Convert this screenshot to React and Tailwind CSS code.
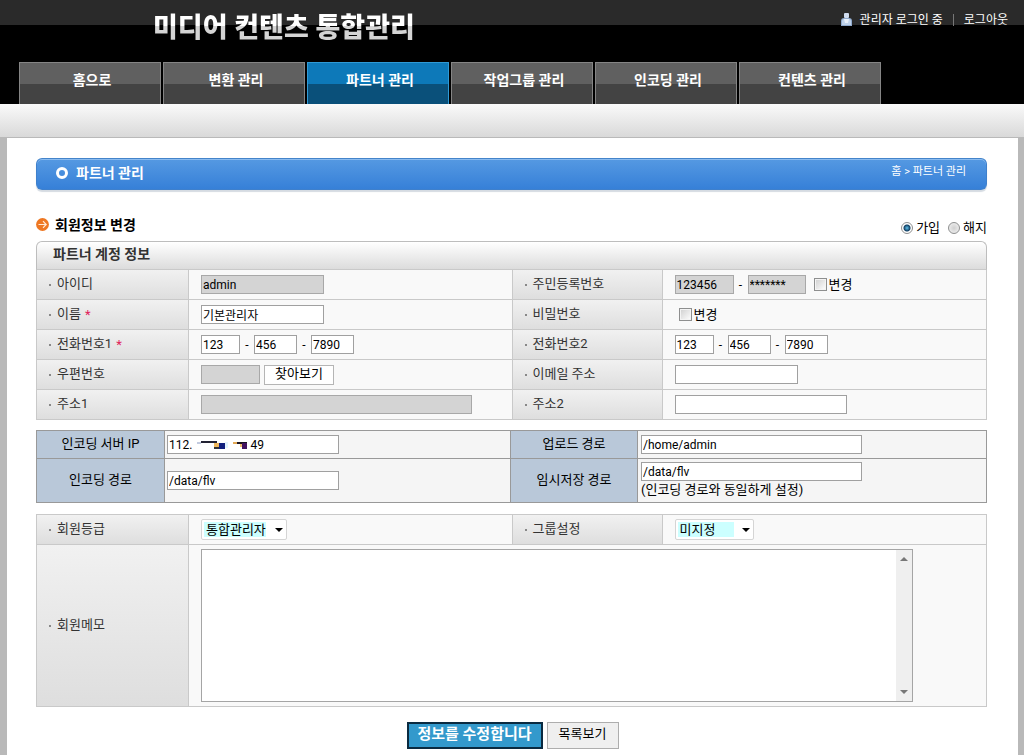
const MENU = [
  '홈으로',
  '변환 관리',
  '파트너 관리',
  '작업그룹 관리',
  '인코딩 관리',
  '컨텐츠 관리',
]

const ACTIVE_MENU = '파트너 관리'

const INPUT =
  'h-[19px] border border-[#a0a0a0] bg-white px-px text-xs leading-4 text-black outline-none'
const INPUT_DISABLED =
  'h-[19px] border border-[#a8a8a8] bg-[#d4d4d4] px-px text-xs leading-4 text-black outline-none'

function UserIcon() {
  return (
    <svg width="11" height="14" viewBox="0 0 11 14" aria-hidden="true">
      <rect x="3" y="0" width="5" height="5" rx="1" fill="#cfdcef" />
      <path d="M0 8 Q0 5 3 5 H8 Q11 5 11 8 V13 H0 Z" fill="#8fa9cc" />
      <path d="M1 8 Q1 6 3 6 H8 Q10 6 10 8 V12 H1 Z" fill="#bfd2ea" />
      <path d="M3 6 H8 L7 10 H4 Z" fill="#e8f0fa" />
    </svg>
  )
}

function ArrowBadge() {
  return (
    <svg width="13" height="13" viewBox="0 0 13 13" aria-hidden="true">
      <circle cx="6.5" cy="6.5" r="6.4" fill="#ee7722" />
      <path
        d="M2.5 6.5 H10 M7 3.2 L10.2 6.5 L7 9.8"
        fill="none"
        stroke="#ffe9d6"
        strokeWidth="1.2"
      />
    </svg>
  )
}

function Header() {
  return (
    <header className="bg-black bg-[linear-gradient(#2a2a2a_25px,#000_25px)]">
      <div className="flex h-[62px] items-start justify-between pr-4 pl-[153px]">
        <h1 className="bg-[linear-gradient(#fff_55%,#d4d4d4_55%)] bg-clip-text pt-2 text-[27px] leading-10 font-black text-transparent">
          미디어 컨텐츠 통합관리
        </h1>
        <div className="flex items-center pt-2.5 text-xs leading-5 text-white">
          <UserIcon />
          <span className="ml-2">관리자 로그인 중</span>
          <span className="mx-2.5 h-3 w-px bg-[#777]" />
          <a href="#logout">로그아웃</a>
        </div>
      </div>
      <nav className="flex gap-0.5 pl-[19px] text-center text-sm leading-[34px] font-bold text-white">
        {MENU.map((name) => (
          <a
            key={name}
            href="#menu"
            className={
              name === ACTIVE_MENU
                ? 'h-[42px] w-[142px] border border-b-0 border-[#2f9ad6] bg-[linear-gradient(#0d79b9_21px,#0a507a_21px)] pl-1'
                : 'h-[42px] w-[142px] border border-b-0 border-[#858585] bg-[linear-gradient(#606060_21px,#434343_21px)] pl-1'
            }
          >
            {name}
          </a>
        ))}
      </nav>
    </header>
  )
}

function Label({ htmlFor, required, children }) {
  return (
    <label
      htmlFor={htmlFor}
      className="flex items-center border-r border-b border-[#c9c9c9] bg-linear-to-b from-[#f1f1f1] to-[#dedede] pl-3 text-[13px] text-[#333]"
    >
      <span className="mr-1 size-0.5 bg-[#888]" />
      <span className="pb-0.5 pl-0.5">{children}</span>
      {required && <span className="ml-1 text-[#e0225a]">*</span>}
    </label>
  )
}

function Cell({ last, children }) {
  return (
    <div
      className={
        last
          ? 'flex min-h-[30px] items-center border-b border-[#c9c9c9] bg-[#f9f9f9] pl-3'
          : 'flex min-h-[30px] items-center border-r border-b border-[#c9c9c9] bg-[#f9f9f9] pl-3'
      }
    >
      {children}
    </div>
  )
}

function Dash() {
  return <span className="w-3.5 text-center text-xs">-</span>
}

function PhoneInputs({ id, name }) {
  return (
    <>
      <input id={id} className={`${INPUT} w-[39px]`} defaultValue="123" />
      <Dash />
      <input aria-label={`${name} 가운데 자리`} className={`${INPUT} w-[43px]`} defaultValue="456" />
      <Dash />
      <input aria-label={`${name} 끝자리`} className={`${INPUT} w-[43px]`} defaultValue="7890" />
    </>
  )
}

function ChangeCheck({ id }) {
  return (
    <label className="flex items-center gap-0.5 text-[13px]">
      <input
        id={id}
        type="checkbox"
        className="size-[13px] appearance-none border border-[#8e8f8f] bg-linear-to-br from-[#cfcfcf] to-white shadow-[inset_0_0_0_1px_#f4f4f4] checked:bg-[#3399cc]"
      />
      변경
    </label>
  )
}

function StatusRadio({ label, ...props }) {
  return (
    <label className="flex items-center gap-[3px] text-[13px] text-black">
      <input
        type="radio"
        name="status"
        className="size-3 appearance-none rounded-full border border-[#8e8f8f] bg-[radial-gradient(#d0d0d0,#f5f5f5)] checked:bg-[radial-gradient(circle,#5fc3ee_0,#123f63_3px,#fff_4px)]"
        {...props}
      />
      {label}
    </label>
  )
}

function Select({ id, wide, options }) {
  return (
    <span className="relative flex">
      <select
        id={id}
        className={
          wide
            ? 'h-[21px] w-[86px] appearance-none rounded-xs border border-[#d5d5d5] bg-white bg-[linear-gradient(#ccffff,#ccffff)] bg-size-[62px_15px] bg-position-[2px_2px] bg-no-repeat pl-1 text-[13px] leading-4 text-black'
            : 'h-[21px] w-[79px] appearance-none rounded-xs border border-[#d5d5d5] bg-white bg-[linear-gradient(#ccffff,#ccffff)] bg-size-[56px_15px] bg-position-[2px_2px] bg-no-repeat pl-1 text-[13px] leading-4 text-black'
        }
      >
        {options.map((option) => (
          <option key={option}>{option}</option>
        ))}
      </select>
      <svg
        width="8"
        height="4"
        viewBox="0 0 8 4"
        className="pointer-events-none absolute top-[9px] right-1"
        aria-hidden="true"
      >
        <path d="M0 0 H8 L4 4 Z" fill="#000" />
      </svg>
    </span>
  )
}

function AccountSection() {
  return (
    <section>
      <h3 className="h-[29px] rounded-t-md border border-[#bdbdbd] border-b-[#c9c9c9] bg-linear-to-b from-white to-[#dcdcdc] pl-4 text-sm leading-6 font-bold text-[#333]">
        파트너 계정 정보
      </h3>
      <div className="grid grid-cols-[152px_1fr_150px_1fr] border-x border-[#c9c9c9]">
        <Label htmlFor="userId">아이디</Label>
        <Cell>
          <input id="userId" readOnly className={`${INPUT_DISABLED} w-[123px]`} defaultValue="admin" />
        </Cell>
        <Label htmlFor="jumin">주민등록번호</Label>
        <Cell last>
          <input id="jumin" readOnly className={`${INPUT_DISABLED} w-[59px]`} defaultValue="123456" />
          <Dash />
          <input
            aria-label="주민등록번호 뒷자리"
            readOnly
            className={`${INPUT_DISABLED} mr-2 w-[58px]`}
            defaultValue="*******"
          />
          <ChangeCheck id="juminChange" />
        </Cell>

        <Label htmlFor="userName" required>
          이름
        </Label>
        <Cell>
          <input id="userName" className={`${INPUT} w-[123px]`} defaultValue="기본관리자" />
        </Cell>
        <Label htmlFor="passwordChange">비밀번호</Label>
        <Cell last>
          <div className="pl-1">
            <ChangeCheck id="passwordChange" />
          </div>
        </Cell>

        <Label htmlFor="phone1" required>
          전화번호1
        </Label>
        <Cell>
          <PhoneInputs id="phone1" name="전화번호1" />
        </Cell>
        <Label htmlFor="phone2">전화번호2</Label>
        <Cell last>
          <PhoneInputs id="phone2" name="전화번호2" />
        </Cell>

        <Label htmlFor="zipcode">우편번호</Label>
        <Cell>
          <input id="zipcode" readOnly className={`${INPUT_DISABLED} w-[59px]`} />
          <button
            type="button"
            className="ml-1 h-5 w-[70px] border border-[#b5b5b5] bg-white pb-1 text-[13px] leading-4"
          >
            찾아보기
          </button>
        </Cell>
        <Label htmlFor="email">이메일 주소</Label>
        <Cell last>
          <input id="email" className={`${INPUT} w-[123px]`} />
        </Cell>

        <Label htmlFor="address1">주소1</Label>
        <Cell>
          <input id="address1" readOnly className={`${INPUT_DISABLED} w-[271px]`} />
        </Cell>
        <Label htmlFor="address2">주소2</Label>
        <Cell last>
          <input id="address2" className={`${INPUT} w-[172px]`} />
        </Cell>
      </div>
    </section>
  )
}

function ServerLabel({ htmlFor, children }) {
  return (
    <label
      htmlFor={htmlFor}
      className="flex items-center justify-center bg-[#b9c8d9] pb-0.5 text-[13px] text-black"
    >
      {children}
    </label>
  )
}

function ServerSection() {
  return (
    <section className="mt-2.5 grid grid-cols-[127px_345fr_126px_348fr] gap-px border border-[#999] bg-[#999]">
      <ServerLabel htmlFor="serverIp">인코딩 서버 IP</ServerLabel>
      <div className="flex h-[27px] items-center bg-[#f5f5f5] pl-0.5">
        <div className="relative flex">
          <input
            id="serverIp"
            className={`${INPUT} w-[172px] whitespace-pre`}
            defaultValue={'112.\u2003\u2003\u2003\u2003\u2002 49'}
          />
          <svg
            width="52"
            height="9"
            viewBox="0 0 52 9"
            className="pointer-events-none absolute top-1.5 left-[30px]"
            aria-hidden="true"
          >
            <path d="M0 1 H4 V3 H0 Z" fill="#c3cbe0" />
            <path d="M4 0 H20 V2 H4 Z" fill="#223" />
            <path d="M17 2 H23 V7 H17 Z" fill="#f0b85c" />
            <path d="M17 6 H23 V8 H17 Z" fill="#333" />
            <path d="M22 2 H28 V8 H22 Z" fill="#12207e" />
            <path d="M28 1 H31 V7 H28 Z" fill="#e3f4fd" />
            <path d="M36 1 H42 V3 H36 Z" fill="#e3a955" />
            <path d="M40 1 H50 V3 H40 Z" fill="#1a1420" />
            <path d="M43 3 H46 V6 H43 Z" fill="#f0bd6b" />
            <path d="M45 2 H50 V8 H45 Z" fill="#41125f" />
          </svg>
        </div>
      </div>
      <ServerLabel htmlFor="uploadPath">업로드 경로</ServerLabel>
      <div className="flex items-center bg-[#f5f5f5] pl-[3px]">
        <input id="uploadPath" className={`${INPUT} w-[221px]`} defaultValue="/home/admin" />
      </div>

      <ServerLabel htmlFor="encodingPath">인코딩 경로</ServerLabel>
      <div className="flex items-center bg-[#f5f5f5] pl-0.5">
        <input id="encodingPath" className={`${INPUT} w-[172px]`} defaultValue="/data/flv" />
      </div>
      <ServerLabel htmlFor="tempPath">임시저장 경로</ServerLabel>
      <div className="flex h-[43px] flex-col items-start justify-center bg-[#f5f5f5] pl-[3px]">
        <input id="tempPath" className={`${INPUT} w-[221px]`} defaultValue="/data/flv" />
        <p className="text-[13px] leading-[18px]">(인코딩 경로와 동일하게 설정)</p>
      </div>
    </section>
  )
}

function MemberSection() {
  return (
    <section className="mt-[11px] grid grid-cols-[152px_1fr_150px_1fr] border-x border-t border-[#c9c9c9]">
      <Label htmlFor="grade">회원등급</Label>
      <Cell>
        <Select id="grade" wide options={['통합관리자']} />
      </Cell>
      <Label htmlFor="group">그룹설정</Label>
      <Cell last>
        <Select id="group" options={['미지정']} />
      </Cell>
      <Label htmlFor="memo">회원메모</Label>
      <div className="col-span-3 border-b border-[#c9c9c9] bg-[#f9f9f9] py-1 pr-3 pl-3">
        <div className="flex h-[153px] max-w-[712px] border border-[#a5a5a5] bg-white">
          <textarea id="memo" className="flex-1 resize-none overflow-hidden p-1 text-xs outline-none" />
          <div className="flex w-4 flex-col items-center justify-between bg-[#efefef] py-[7px]">
            <svg width="8" height="4" viewBox="0 0 8 4" aria-hidden="true">
              <path d="M0 4 H8 L4 0 Z" fill="#777" />
            </svg>
            <svg width="8" height="4" viewBox="0 0 8 4" aria-hidden="true">
              <path d="M0 0 H8 L4 4 Z" fill="#777" />
            </svg>
          </div>
        </div>
      </div>
    </section>
  )
}

function App() {
  return (
    <div className="flex min-h-screen flex-col bg-[#b9b9b9] font-[Roboto,'Noto_Sans_CJK_KR',sans-serif] text-black">
      <Header />
      <div className="h-[34px] border-b border-[#b9b9b9] bg-linear-to-b from-[#fafafa] to-[#d9d9d9]" />
      <main className="mr-1.5 ml-[7px] flex-1 bg-white pt-5 pr-[31px] pl-[29px]">
        <div className="flex h-8 items-center justify-between rounded-md border border-[#3f80cc] border-t-[#4484ca] bg-linear-to-b from-[#5599e2] to-[#3680d8] pr-5 pl-[19px] text-white shadow-[inset_0_1px_0_#8bbcf0,0_2px_1px_#d5dbe2]">
          <h2 className="flex items-center gap-2 pb-0.5 text-sm font-bold">
            <span className="size-3 rounded-full border-3 border-white" />
            파트너 관리
          </h2>
          <p className="pb-1 text-[11px]">
            <a href="#home">홈</a> &gt; <a href="#partner">파트너 관리</a>
          </p>
        </div>

        <form onSubmit={(e) => e.preventDefault()}>
          <div className="mt-6 flex h-[27px] items-center justify-between">
            <h3 className="flex items-center gap-1.5 pb-1.5 text-sm font-bold">
              <ArrowBadge />
              회원정보 변경
            </h3>
            <div className="flex gap-2">
              <StatusRadio label="가입" defaultChecked />
              <StatusRadio label="해지" />
            </div>
          </div>

          <AccountSection />
          <ServerSection />
          <MemberSection />

          <div className="mt-[15px] flex justify-center gap-1 pl-0.5">
            <button
              type="submit"
              className="h-[27px] w-[136px] border-2 border-[#0a2a40] bg-[#3399cc] pb-1 text-[15px] leading-5 font-bold text-white"
            >
              정보를 수정합니다
            </button>
            <button
              type="button"
              className="h-[27px] w-[72px] border border-[#adadad] bg-[#efefef] pb-1 text-[13px] leading-5"
            >
              목록보기
            </button>
          </div>
        </form>
      </main>
    </div>
  )
}

export default App
